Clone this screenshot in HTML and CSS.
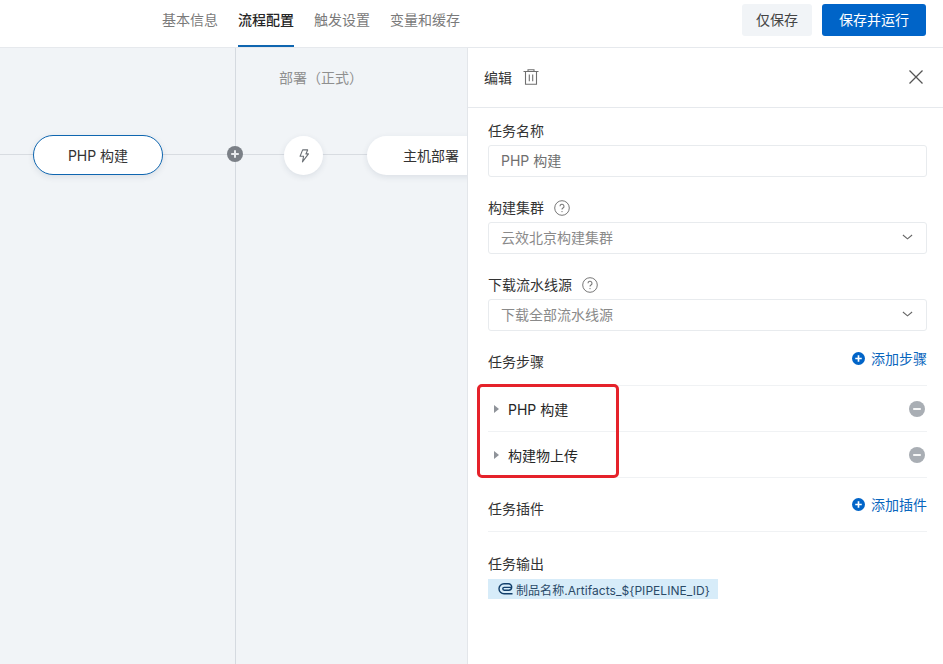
FILE: index.html
```html
<!DOCTYPE html>
<html lang="zh-CN">
<head>
<meta charset="utf-8">
<title>流程配置</title>
<link rel="stylesheet" href="styles.css">
</head>
<body>
<div class="app">
  <header class="topbar">
    <nav class="tabs">
      <a class="tab">基本信息</a>
      <a class="tab active">流程配置</a>
      <a class="tab">触发设置</a>
      <a class="tab">变量和缓存</a>
    </nav>
    <div class="actions">
      <button class="btn btn-light">仅保存</button>
      <button class="btn btn-primary">保存并运行</button>
    </div>
  </header>
  <div class="main">
    <section class="canvas">
      <div class="stage-line"></div>
      <div class="stage-title">部署（正式）</div>
      <div class="wire"></div>
      <div class="node node-active">PHP 构建</div>
      <div class="plus"><svg viewBox="0 0 16 16" width="16" height="16"><circle cx="8" cy="8" r="8" fill="#7b8087"/><path d="M8 4.2v7.6M4.2 8h7.6" stroke="#e8eaed" stroke-width="2"/></svg></div>
      <div class="trigger"><svg viewBox="0 0 11 15" width="10" height="14"><path d="M4 .8h5.500L7.600 5.200h2.800L3.800 14l1.300-6.300H1.200z" fill="none" stroke="#6b7076" stroke-width="1.200" stroke-linejoin="round"/></svg></div>
      <div class="node node-host">主机部署</div>
    </section>
    <aside class="panel">
      <div class="panel-head">
        <span class="panel-title">编辑</span>
        <svg class="trash" viewBox="0 0 16 16" width="16" height="16"><path d="M.5 2.500h15M5 2.500V.8h6v1.700M2.500 2.500V15.300h11V2.500M6.300 5.500v6.800M9.700 5.500v6.800" fill="none" stroke="#6f6f6f" stroke-width="1.100"/></svg>
        <svg class="close" viewBox="0 0 16 16" width="16" height="16"><path d="M1.500 1.500l13 13M14.500 1.500l-13 13" stroke="#555" stroke-width="1.300" fill="none"/></svg>
      </div>
      <div class="panel-body">
        <div class="field">
          <label class="label">任务名称</label>
          <div class="input input-filled">PHP 构建</div>
        </div>
        <div class="field">
          <label class="label">构建集群 <svg class="help" viewBox="0 0 16 16" width="16" height="16"><circle cx="8" cy="8" r="7.300" fill="none" stroke="#777" stroke-width="1"/><path d="M6 6.300a2 2 0 1 1 3 1.700c-.7.400-1 .8-1 1.500" fill="none" stroke="#777" stroke-width="1.100"/><circle cx="8" cy="11.600" r=".7" fill="#777"/></svg></label>
          <div class="input"><span>云效北京构建集群</span><svg class="chev" viewBox="0 0 12 6" width="11" height="6"><path d="M1 .8l5 4.200 5-4.200" fill="none" stroke="#666" stroke-width="1.200"/></svg></div>
        </div>
        <div class="field">
          <label class="label">下载流水线源 <svg class="help" viewBox="0 0 16 16" width="16" height="16"><circle cx="8" cy="8" r="7.300" fill="none" stroke="#777" stroke-width="1"/><path d="M6 6.300a2 2 0 1 1 3 1.700c-.7.400-1 .8-1 1.500" fill="none" stroke="#777" stroke-width="1.100"/><circle cx="8" cy="11.600" r=".7" fill="#777"/></svg></label>
          <div class="input"><span>下载全部流水线源</span><svg class="chev" viewBox="0 0 12 6" width="11" height="6"><path d="M1 .8l5 4.200 5-4.200" fill="none" stroke="#666" stroke-width="1.200"/></svg></div>
        </div>
        <div class="section-head steps-head">
          <span class="label-text">任务步骤</span>
          <a class="add"><svg viewBox="0 0 14 14" width="13" height="13"><circle cx="7" cy="7" r="7" fill="#0064c8"/><path d="M7 3.500v7M3.500 7h7" stroke="#fff" stroke-width="1.800"/></svg>添加步骤</a>
        </div>
        <div class="steps">
          <div class="step"><span class="caret"></span><span class="step-name">PHP 构建</span><svg class="minus" viewBox="0 0 16 16" width="16" height="16"><circle cx="8" cy="8" r="8" fill="#a9aeb4"/><path d="M4.200 8h7.600" stroke="#fff" stroke-width="1.800"/></svg></div>
          <div class="step"><span class="caret"></span><span class="step-name">构建物上传</span><svg class="minus" viewBox="0 0 16 16" width="16" height="16"><circle cx="8" cy="8" r="8" fill="#a9aeb4"/><path d="M4.200 8h7.600" stroke="#fff" stroke-width="1.800"/></svg></div>
          <div class="highlight"></div>
        </div>
        <div class="section-head plugins-head">
          <span class="label-text">任务插件</span>
          <a class="add"><svg viewBox="0 0 14 14" width="13" height="13"><circle cx="7" cy="7" r="7" fill="#0064c8"/><path d="M7 3.500v7M3.500 7h7" stroke="#fff" stroke-width="1.800"/></svg>添加插件</a>
        </div>
        <div class="output">
          <div class="label">任务输出</div>
          <div class="tag"><svg viewBox="0 0 16 12" width="16" height="12"><path d="M14.500 10.800H6a5 5 0 0 1 0-10h4.500a3.200 3.200 0 0 1 0 6.400H6.200a1.400 1.400 0 0 1 0-2.800h7" fill="none" stroke="#123f6b" stroke-width="1.400"/></svg><span>制品名称.Artifacts_${PIPELINE_ID}</span></div>
        </div>
      </div>
    </aside>
  </div>
</div>
</body>
</html>
```
FILE: styles.css
```css
* { box-sizing: border-box; }
html, body { margin: 0; height: 100%; }
body {
  font-family: "Inter", "Noto Sans CJK SC", sans-serif;
  font-size: 14px;
  color: #333;
  background: #fff;
  overflow: hidden;
}
.app { width: 943px; height: 664px; display: flex; flex-direction: column; }

.topbar {
  height: 48px;
  flex: none;
  display: flex;
  justify-content: space-between;
  padding: 0 17px 0 162px;
  border-bottom: 1px solid #e6e9ed;
  background: #fff;
}
.tabs { display: flex; gap: 20px; }
.tab {
  height: 47px;
  line-height: 39px;
  color: #7a7a7a;
  border-bottom: 2px solid transparent;
}
.tab.active { color: #262626; border-bottom-color: #0f66b0; font-weight: 500; }
.actions { display: flex; gap: 10px; padding-top: 4px; }
.btn {
  height: 32px;
  border: 0;
  border-radius: 3px;
  font: inherit;
  padding: 0 0 2px;
}
.btn-light { width: 70px; background: #f1f4f7; color: #444; }
.btn-primary { width: 104px; background: #0064c8; color: #fff; }

.main { flex: 1; display: flex; min-height: 0; }

.canvas {
  position: relative;
  width: 468px;
  flex: none;
  background: #f1f4f7;
  overflow: hidden;
  border-right: 1px solid #e3e6ea;
}
.stage-line { position: absolute; left: 235px; top: 0; bottom: 0; width: 1px; background: #d5dae0; }
.stage-title { position: absolute; left: 279px; top: 20px; line-height: 20px; font-size: 14px; color: #8f8f8f; }
.wire { position: absolute; left: 0; right: 0; top: 106px; height: 1px; background: #d8dce1; }
.node {
  position: absolute;
  border-radius: 20px;
  background: #fff;
  text-align: center;
  color: #333;
  box-shadow: 0 2px 6px rgba(30, 50, 80, .1);
}
.node-active { left: 33px; top: 87px; width: 130px; height: 40px; line-height: 40px; border: 1px solid #0f66b0; }
.node-host { left: 367px; top: 88px; width: 130px; height: 39px; line-height: 39px; text-align: left; padding-left: 36px; }
.plus { position: absolute; left: 227px; top: 98px; width: 16px; height: 16px; line-height: 0; }
.trigger {
  position: absolute;
  left: 284px;
  top: 88px;
  width: 39px;
  height: 39px;
  border-radius: 50%;
  background: #fff;
  display: flex;
  align-items: center;
  justify-content: center;
  box-shadow: 0 2px 6px rgba(30, 50, 80, .1);
}

.panel { flex: 1; min-width: 0; background: #fff; display: flex; flex-direction: column; }
.panel-head {
  height: 60px;
  flex: none;
  display: flex;
  align-items: center;
  padding: 0 19px 2px 16px;
  border-bottom: 1px solid #e6e9ed;
}
.panel-title { color: #333; margin-right: 11px; }
.close { margin-left: auto; }
.panel-body { padding: 12px 16px 0 20px; }

.field { margin-bottom: 20px; }
.label, .label-text { display: block; line-height: 22px; color: #333; font-size: 14px; }
.label { display: flex; align-items: center; gap: 10px; height: 22px; margin-bottom: 3px; }
.input {
  height: 32px;
  border: 1px solid #e8ebee;
  border-radius: 3px;
  padding: 0 12px 2px;
  display: flex;
  align-items: center;
  justify-content: space-between;
  color: #8a8a8a;
}
.input-filled { color: #6f6f6f; }
.chev { margin-right: 1px; }
.help { flex: none; }

.section-head { display: flex; justify-content: space-between; }
.steps-head { height: 35px; margin-top: -1px; align-items: flex-start; }
.steps-head .label-text { margin-top: 1px; }
.add {
  display: flex;
  align-items: center;
  gap: 6px;
  height: 22px;
  color: #0a66bd;
}
.steps-head .add { margin-top: -3px; }
.steps { position: relative; border-top: 1px solid #f0f2f4; }
.step {
  height: 46px;
  display: flex;
  align-items: center;
  border-bottom: 1px solid #f0f2f4;
  padding-left: 6px;
  color: #262626;
}
.caret {
  width: 0;
  height: 0;
  border-left: 5px solid #8f9399;
  border-top: 4px solid transparent;
  border-bottom: 4px solid transparent;
  margin-top: 1px;
  margin-right: 9px;
}
.step-name { flex: 1; }
.minus { flex: none; margin-top: 1px; margin-right: 2px; }
.highlight {
  position: absolute;
  left: -11px;
  top: -2px;
  width: 142px;
  height: 94px;
  border: 3px solid #e5222a;
  border-radius: 5px;
  pointer-events: none;
}
.plugins-head { height: 54px; border-bottom: 1px solid #f0f2f4; }
.plugins-head .label-text { margin-top: 20px; }
.plugins-head .add { margin-top: 15px; }
.output { padding-top: 21px; }
.output .label { margin-bottom: 4px; }
.tag {
  display: flex;
  width: 230px;
  height: 20px;
  align-items: center;
  gap: 2px;
  background: #d7ecf9;
  padding-left: 10px;
  font-size: 12px;
  color: #2b4a68;
  white-space: nowrap;
  letter-spacing: .05px;
}
```
